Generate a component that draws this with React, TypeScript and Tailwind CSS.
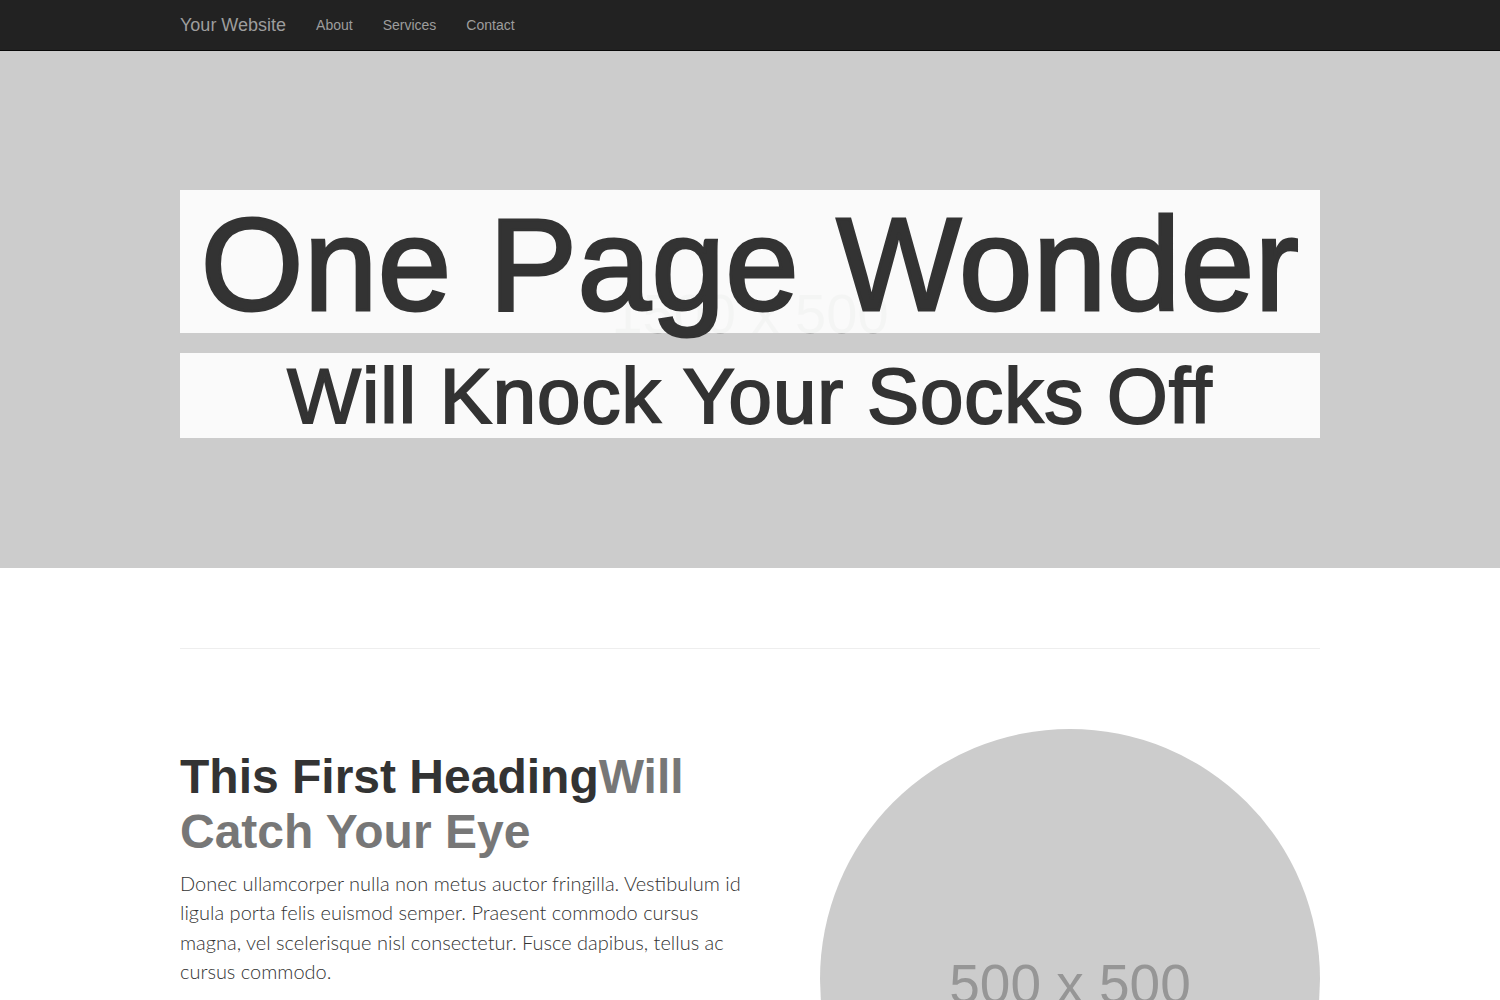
const Navbar = () => {
    return (
        <nav className="h-[51px] bg-[#222222] border-b border-[#080808]">
            <div className="w-[1170px] mx-auto px-[15px] flex items-center h-[50px]">
                <a className="text-[18px] leading-[20px] text-[#9d9d9d]">Your Website</a>
                <div className="flex ml-[15px]">
                    <a className="px-[15px] text-[14px] text-[#9d9d9d]">About</a>
                    <a className="px-[15px] text-[14px] text-[#9d9d9d]">Services</a>
                    <a className="px-[15px] text-[14px] text-[#9d9d9d]">Contact</a>
                </div>
            </div>
        </nav>
    )
}

const Hero = () => {
    return (
        <header className="relative h-[517px] bg-[#cccccc] overflow-hidden">
            {/* placeholder label of the background image */}
            <div className="absolute inset-0 flex items-center justify-center pt-[8px] text-[56px] text-[#969696]">
                1500 x 500
            </div>
            <div className="relative w-[1170px] mx-auto px-[15px] pt-[139px] flex flex-col gap-[20px]">
                <h1 className="h-[143px] bg-white/90 text-center text-[132px] leading-[150px] text-[#333333] tracking-[0.5px] whitespace-nowrap [-webkit-text-stroke:3px_#333333]">
                    One Page Wonder
                </h1>
                <h2 className="h-[85px] bg-white/90 text-center text-[78px] leading-[86px] text-[#333333] tracking-[1px] whitespace-nowrap [-webkit-text-stroke:2px_#333333]">
                    Will Knock Your Socks Off
                </h2>
            </div>
        </header>
    )
}

const Featurette = () => {
    return (
        <section className="w-[1170px] mx-auto px-[15px]">
            <hr className="mt-[80px] mb-[80px] border-t border-[#eeeeee]" />
            <div className="flex justify-between">
                <div className="w-[580px]">
                    <h2 className="mt-[20px] mb-[10px] text-[48px] leading-[55px] font-bold text-[#333333]">
                        This First Heading<span className="text-[#777777]">Will Catch Your Eye</span>
                    </h2>
                    <p className="text-[20px] leading-[29.4px] font-light text-[#333333] font-['Lato',sans-serif]">
                        Donec ullamcorper nulla non metus auctor fringilla. Vestibulum id ligula porta felis euismod semper. Praesent commodo cursus magna, vel scelerisque nisl consectetur. Fusce dapibus, tellus ac cursus commodo.
                    </p>
                </div>
                <div className="w-[500px] h-[500px] rounded-full bg-[#cccccc] flex items-center justify-center shrink-0">
                    <span className="text-[55px] text-[#969696] pt-[10px]">500 x 500</span>
                </div>
            </div>
        </section>
    )
}

export default function App() {
    return (
        <div className="min-h-screen bg-white font-['Liberation_Sans',Arial,sans-serif]">
            <Navbar />
            <Hero />
            <Featurette />
        </div>
    )
}
